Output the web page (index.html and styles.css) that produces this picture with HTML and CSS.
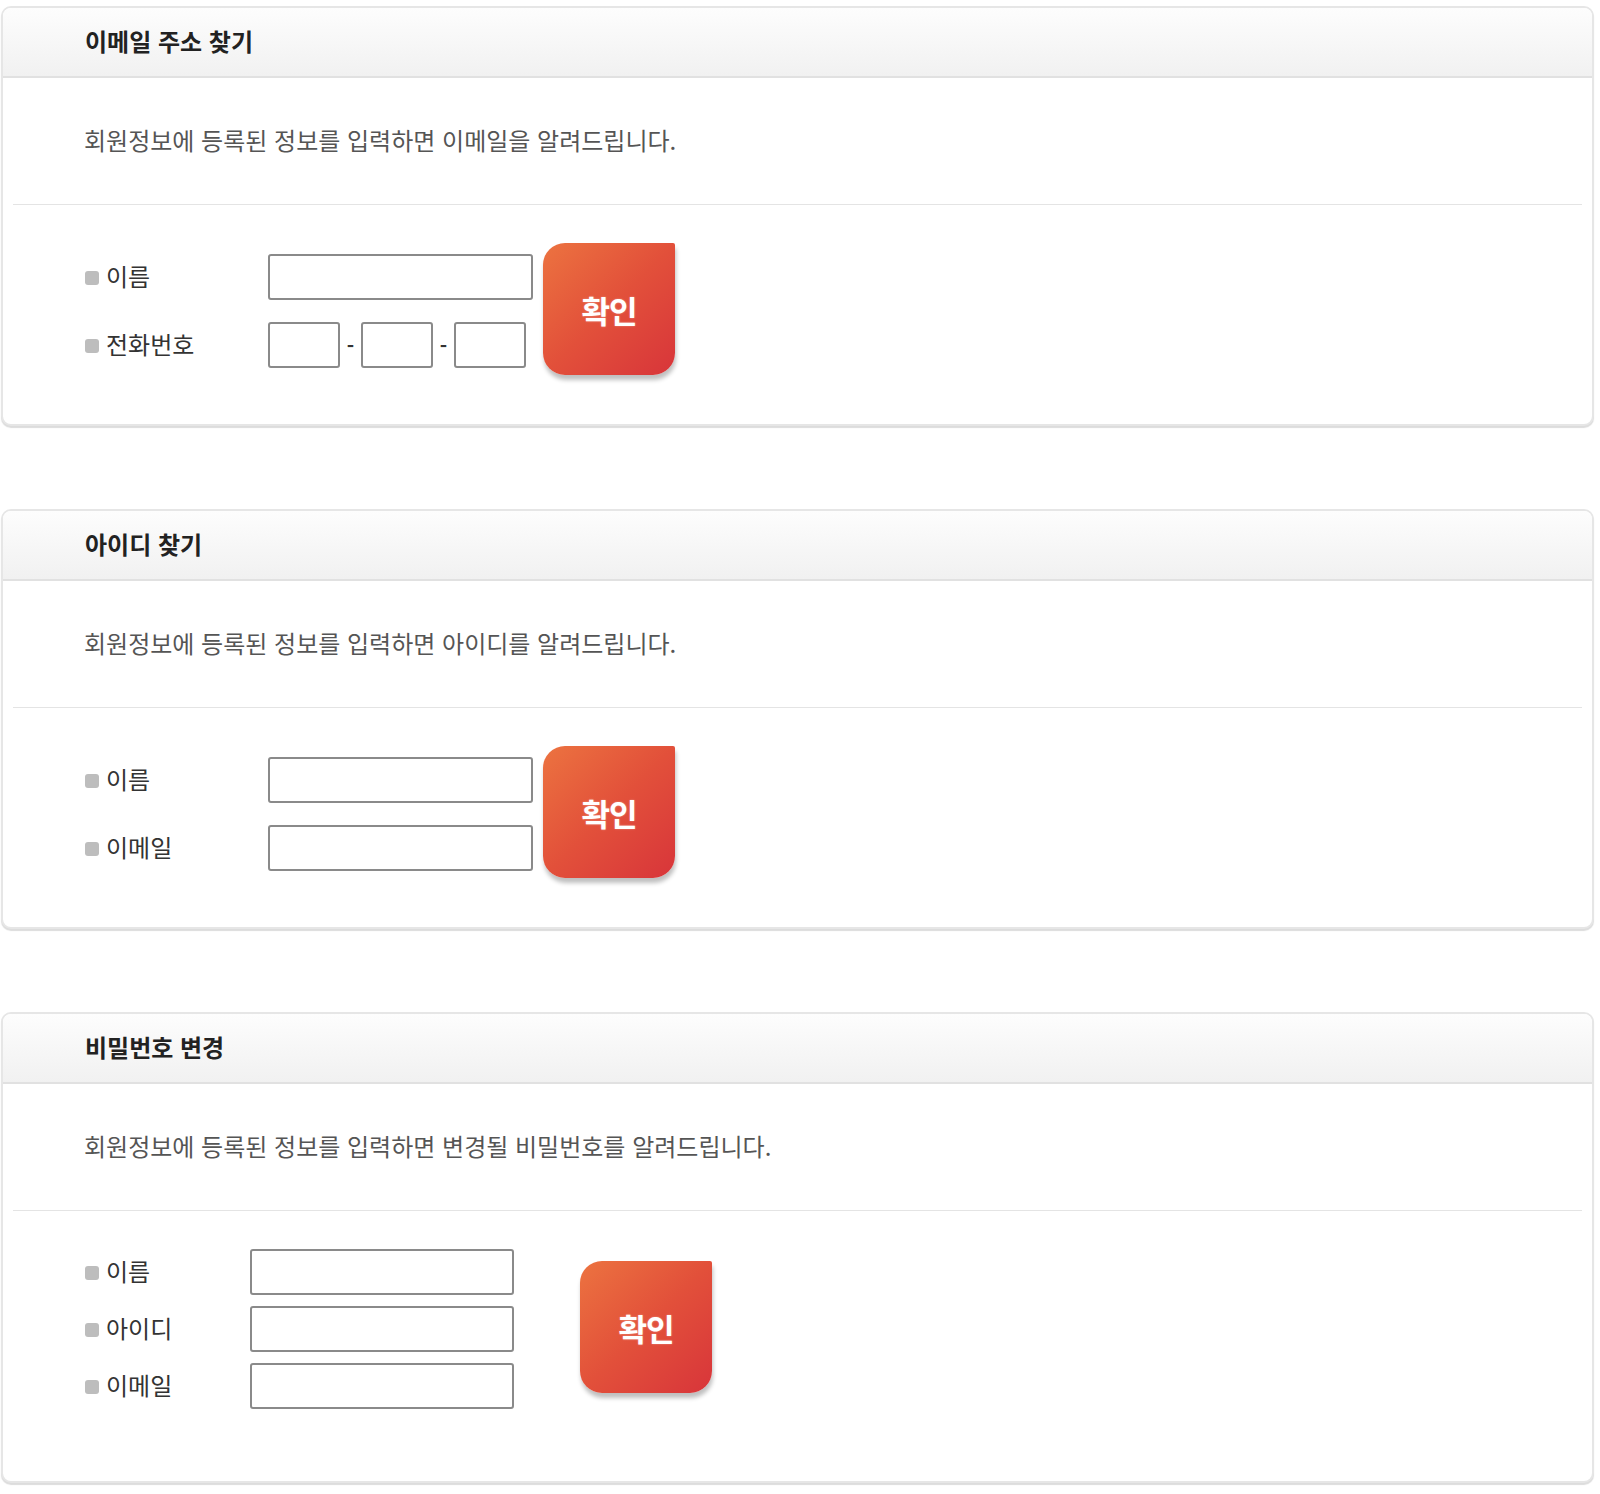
FILE: index.html
```html
<!DOCTYPE html>
<html lang="ko">
<head>
<meta charset="utf-8">
<title>찾기</title>
<link rel="stylesheet" href="styles.css">
</head>
<body>
<div class="page">
  <section class="panel">
    <div class="panel-head"><h2>이메일 주소 찾기</h2></div>
    <p class="desc">회원정보에 등록된 정보를 입력하면 이메일을 알려드립니다.</p>
    <div class="sep"></div>
    <div class="form">
      <div class="fields">
        <div class="row"><span class="label">이름</span><input class="inp wide" type="text"></div>
        <div class="row"><span class="label">전화번호</span>
          <input class="inp short" type="text"><span class="dash">-</span><input class="inp short" type="text"><span class="dash">-</span><input class="inp short" type="text">
        </div>
      </div>
      <button class="btn" type="button">확인</button>
    </div>
  </section>

  <section class="panel">
    <div class="panel-head"><h2>아이디 찾기</h2></div>
    <p class="desc">회원정보에 등록된 정보를 입력하면 아이디를 알려드립니다.</p>
    <div class="sep"></div>
    <div class="form">
      <div class="fields">
        <div class="row"><span class="label">이름</span><input class="inp wide" type="text"></div>
        <div class="row"><span class="label">이메일</span><input class="inp wide" type="text"></div>
      </div>
      <button class="btn" type="button">확인</button>
    </div>
  </section>

  <section class="panel panel-pw">
    <div class="panel-head"><h2>비밀번호 변경</h2></div>
    <p class="desc">회원정보에 등록된 정보를 입력하면 변경될 비밀번호를 알려드립니다.</p>
    <div class="sep"></div>
    <div class="form form-pw">
      <div class="fields fields-pw">
        <div class="row"><span class="label">이름</span><input class="inp wide" type="text"></div>
        <div class="row"><span class="label">아이디</span><input class="inp wide" type="text"></div>
        <div class="row"><span class="label">이메일</span><input class="inp wide" type="text"></div>
      </div>
      <button class="btn btn-pw" type="button">확인</button>
    </div>
  </section>
</div>
</body>
</html>
```
FILE: styles.css
```css
* { box-sizing: border-box; }
html, body { margin: 0; padding: 0; background: #fff; }
body {
  font-family: "Noto Sans CJK KR", "Noto Sans", sans-serif;
  color: #333;
}
.page {
  padding: 6px 6px 10px 1px;
  display: flex;
  flex-direction: column;
  gap: 83px;
}
.panel {
  border: 2px solid #e6e6e6;
  border-radius: 10px;
  box-shadow: 0 2px 1px #dcdcdc;
  background: #fff;
  height: 420px;
  overflow: hidden;
}
.panel-pw { height: 471px; }
.panel-head {
  height: 70px;
  background: linear-gradient(#fdfdfd, #f1f1f1);
  border-bottom: 2px solid #e1e1e1;
  display: flex;
  align-items: center;
  padding-left: 82px;
  padding-bottom: 4px;
}
.panel-head h2 {
  margin: 0;
  font-size: 24px;
  font-weight: 700;
  color: #222;
}
.desc {
  margin: 0;
  height: 126px;
  display: flex;
  align-items: center;
  padding-left: 81px;
  padding-bottom: 4px;
  font-size: 24px;
  color: #555;
}
.sep {
  height: 1px;
  background: #e4e4e4;
  margin: 0 10px;
}
.form {
  display: flex;
  align-items: flex-start;
  padding: 38px 0 0 82px;
}
.fields {
  display: flex;
  flex-direction: column;
  gap: 22px;
  padding-top: 11px;
}
.row {
  display: flex;
  align-items: center;
  height: 46px;
}
.label {
  width: 183px;
  display: flex;
  align-items: center;
  font-size: 24px;
  color: #333;
  padding-bottom: 4px;
}
.label::before {
  content: "";
  width: 14px;
  height: 14px;
  border-radius: 3px;
  background: #bdbdbd;
  margin-right: 7px;
  margin-top: 6px;
}
.inp {
  height: 46px;
  border: 2px solid #8a8a8a;
  border-radius: 3px;
  background: #fff;
  margin: 0;
  padding: 0;
}
.wide { width: 265px; }
.short { width: 72px; }
.dash {
  width: 21px;
  text-align: center;
  font-size: 20px;
  font-weight: 700;
  color: #333;
}
.btn {
  width: 132px;
  height: 132px;
  margin-left: 10px;
  border: none;
  border-radius: 22px 2px 22px 22px;
  background: linear-gradient(135deg, #ec7340 0%, #e2503a 50%, #d8353a 100%);
  box-shadow: 1px 5px 4px rgba(0,0,0,0.25);
  color: #fff;
  font-family: "Noto Sans CJK KR", sans-serif;
  font-size: 31px;
  font-weight: 700;
  letter-spacing: -1px;
  text-shadow: 0 0 2px rgba(255,255,255,0.4);
  cursor: pointer;
  padding: 0;
}
.form-pw { padding-top: 27px; }
.fields-pw { gap: 11px; padding-top: 11px; }
.fields-pw .label { width: 165px; }
.fields-pw .wide { width: 264px; }
.btn-pw { margin-left: 66px; margin-top: 23px; }
```
